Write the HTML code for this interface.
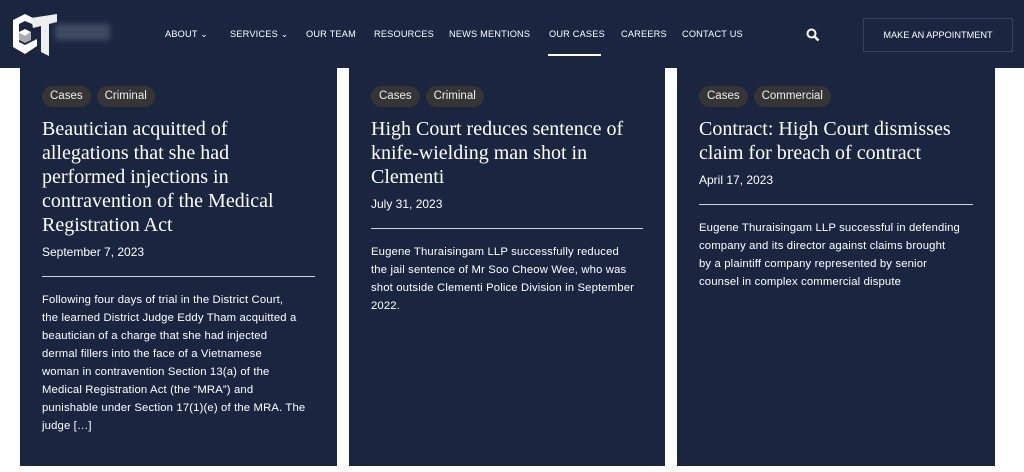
<!DOCTYPE html><html><head><style>
*{margin:0;padding:0;box-sizing:border-box}
body{width:1024px;height:472px;background:#fff;font-family:"Liberation Sans",sans-serif;overflow:hidden;position:relative}
.hdr{position:absolute;left:0;top:0;width:1024px;height:68px;background:#1a2640}
.nav{position:absolute;top:29px;font-size:9.2px;color:#fff;letter-spacing:.2px}
.nav span{position:absolute;white-space:nowrap}
.btn{position:absolute;left:863px;top:18px;width:150px;height:34px;border:1px solid #34415c;color:#fff;font-size:9.2px;text-align:center;line-height:32px}
.card{position:absolute;top:68px;height:398px;background:#1a2640;padding:17px 22px 0 22px;color:#fff;white-space:nowrap}
.tags span{display:inline-block;background:#353535;color:#eee;font-size:11.5px;height:21px;line-height:21px;padding:0 8px;border-radius:11px;margin-right:6px;margin-top:1px}
h2{font-family:"Liberation Serif",serif;font-weight:normal;font-size:20px;line-height:24px;margin-top:10px}
.date{font-size:12px;line-height:20px;margin-top:5px}
hr{border:0;border-top:1px solid #cfd3da;margin-top:14px}
p{font-size:11.3px;line-height:18px;margin-top:14px;letter-spacing:.15px}
</style></head><body>
<div class="hdr">
<svg style="position:absolute;left:11px;top:12px" width="52" height="46" viewBox="0 0 52 46"><path d="M2 8 L14 2 L26 8 L26 14 L14 9 L8 12 L8 20 L14 17 L20 20 L14 24 L8 21 L8 30 L14 33 L26 27 L26 34 L14 42 L2 35 Z" fill="#fff"/><path d="M20 6 L46 2 L46 10 L38 12 L38 44 L30 40 L30 14 L22 16 Z" fill="#eee"/><path d="M8 21 L14 24 L20 20 L20 28 L14 31 L8 28Z" fill="#aaa"/></svg>
<div style="position:absolute;left:55px;top:24px;width:55px;height:16px;background:#5a6478;filter:blur(3px);opacity:.6"></div>
<div class="nav">
<span style="left:165px">ABOUT ⌄</span><span style="left:230px">SERVICES ⌄</span><span style="left:306px">OUR TEAM</span><span style="left:374px">RESOURCES</span><span style="left:449px">NEWS MENTIONS</span><span style="left:549px">OUR CASES</span><span style="left:621px">CAREERS</span><span style="left:682px">CONTACT US</span></div>
<div style="position:absolute;left:548px;top:54px;width:53px;height:2px;background:#fff"></div>
<svg style="position:absolute;left:806px;top:28px" width="14" height="14" viewBox="0 0 14 14"><circle cx="5.5" cy="5.5" r="4" stroke="#fff" stroke-width="2" fill="none"/><path d="M8.5 8.5 L12.5 12.5" stroke="#fff" stroke-width="2.4"/></svg>
<div class="btn">MAKE AN APPOINTMENT</div>
</div>
<div class="card" style="left:20px;width:317px">
<div class="tags"><span>Cases</span><span>Criminal</span></div>
<h2>Beautician acquitted of<br>allegations that she had<br>performed injections in<br>contravention of the Medical<br>Registration Act</h2>
<div class="date">September 7, 2023</div><hr>
<p>Following four days of trial in the District Court,<br>the learned District Judge Eddy Tham acquitted a<br>beautician of a charge that she had injected<br>dermal fillers into the face of a Vietnamese<br>woman in contravention Section 13(a) of the<br>Medical Registration Act (the “MRA”) and<br>punishable under Section 17(1)(e) of the MRA. The<br>judge […]</p>
</div>
<div class="card" style="left:349px;width:316px">
<div class="tags"><span>Cases</span><span>Criminal</span></div>
<h2>High Court reduces sentence of<br>knife-wielding man shot in<br>Clementi</h2>
<div class="date">July 31, 2023</div><hr>
<p>Eugene Thuraisingam LLP successfully reduced<br>the jail sentence of Mr Soo Cheow Wee, who was<br>shot outside Clementi Police Division in September<br>2022.</p>
</div>
<div class="card" style="left:677px;width:318px">
<div class="tags"><span>Cases</span><span>Commercial</span></div>
<h2>Contract: High Court dismisses<br>claim for breach of contract</h2>
<div class="date">April 17, 2023</div><hr>
<p>Eugene Thuraisingam LLP successful in defending<br>company and its director against claims brought<br>by a plaintiff company represented by senior<br>counsel in complex commercial dispute</p>
</div>
</body></html>
